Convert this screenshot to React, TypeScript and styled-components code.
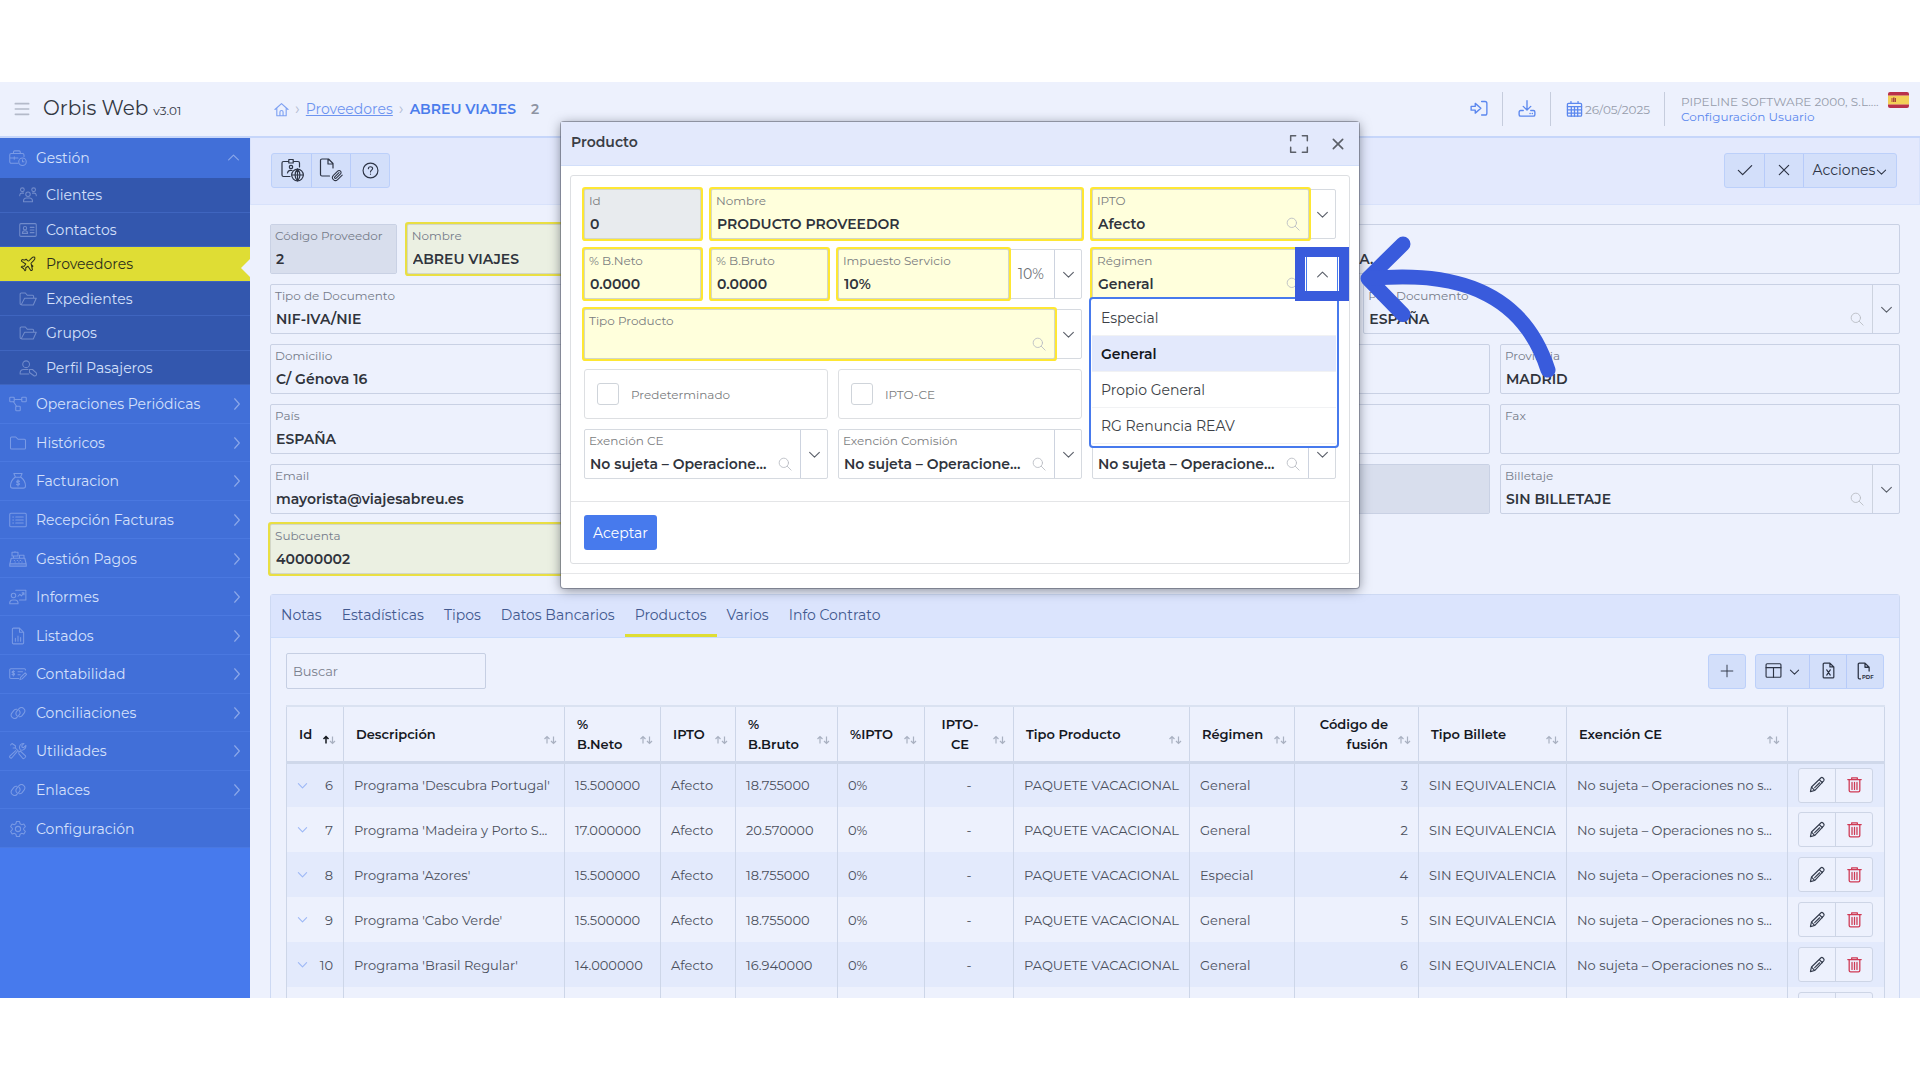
import React from 'react';
import styled, { createGlobalStyle, css } from 'styled-components';

const Global = createGlobalStyle`
  *, *::before, *::after { box-sizing: border-box; }
  html, body { margin: 0; background: #fff; }
  body, button, input { font-family: Montserrat, Inter, "Open Sans", sans-serif; }
  button { cursor: pointer; padding: 0; margin: 0; color: inherit; }
`;

/* ---------- icons ---------- */

const Glyph = styled.svg<{ $size?: number; $weight?: number }>`
  width: ${p => p.$size ?? 18}px;
  height: ${p => p.$size ?? 18}px;
  flex: none;
  display: block;
  fill: none;
  stroke: currentColor;
  stroke-width: ${p => p.$weight ?? 1.4};
  stroke-linecap: round;
  stroke-linejoin: round;
`;

const shapes: Record<string, React.ReactNode> = {
  menu: <path d="M2 4h20M2 12h20M2 20h20" />,
  briefcase: <><path d="M12 19H3a2 2 0 0 1-2-2V8a2 2 0 0 1 2-2h15a2 2 0 0 1 2 2v2M6 6V4a1.500 1.500 0 0 1 1.500-1.500h6A1.500 1.500 0 0 1 15 4v2M1 12h11M7 10.500v3" /><circle cx="18" cy="17" r="5" /><path d="M18 14.500V17h2" /></>,
  users: <><circle cx="12" cy="11" r="3" /><circle cx="4.500" cy="5" r="2.500" /><circle cx="19.500" cy="5" r="2.500" /><path d="M6 21v-1a4 4 0 0 1 4-4h4a4 4 0 0 1 4 4v1zM1 13v-1a3 3 0 0 1 3-2.500h2M23 13v-1a3 3 0 0 0-3-2.500h-2" /></>,
  card: <><rect x="1" y="3.500" width="22" height="17" rx="1.500" /><circle cx="8" cy="9.500" r="2.200" /><path d="M4.500 16.500a3.500 3.500 0 0 1 7 0zM15 8.500h5M15 12h5M15 15.500h5" /></>,
  plane: <path d="M17.800 19.200L16 11l3.500-3.500C21 6 21.500 4 21 3c-1-.5-3 0-4.500 1.500L13 8l-1.500-.4-2-2-1.800 1.200-2.900-.6c-.5-.1-.9.1-1.100.5l-.3.5c-.2.5-.1 1 .3 1.300L9 12l-2 3H4l-1 1 3 2 2 3 1-1v-3l3-2 3.500 5.300c.3.4.8.5 1.300.3l.5-.2c.4-.3.6-.7.5-1.200l-.6-2.600 1.300-1.800-2-2" />,
  folderOpen: <path d="M4 20h15l4-9H7.500L3 19.500A1.500 1.500 0 0 1 1.500 18V5.500A1.500 1.500 0 0 1 3 4h5.500l2.500 3h7a1.500 1.500 0 0 1 1.500 1.500V11" />,
  passenger: <><circle cx="9.500" cy="7" r="4.500" /><path d="M13 20H1.500v-1.500A4.500 4.500 0 0 1 6 14h6" /><path d="M14 14h4l5 4.500a2.500 2.500 0 0 1-3.500 3.500L14 18z" /></>,
  nodes: <><rect x="1" y="3" width="6" height="6" rx="1" /><rect x="17" y="3" width="6" height="6" rx="1" /><rect x="9" y="15" width="6" height="6" rx="1" /><path d="M7 6h10M6 9l4 6" /></>,
  folder: <path d="M2 5.500A1.500 1.500 0 0 1 3.500 4H9l3 3h8.500A1.500 1.500 0 0 1 22 8.500v10a1.500 1.500 0 0 1-1.500 1.500h-17A1.500 1.500 0 0 1 2 18.500z" />,
  money: <><path d="M8.500 6.500L6.500 2h11l-2 4.500M8 7h8c3 2.500 6 7.500 6 11.500a3 3 0 0 1-3 3H5a3 3 0 0 1-3-3C2 14.500 5 9.500 8 7z" /><path d="M14 12.500c-.6-1-3.800-1-3.800.6 0 1.700 3.800 1 3.800 2.800 0 1.600-3.300 1.600-4 .4M12 10.500v8" /></>,
  list: <><rect x="1" y="3" width="22" height="18" rx="1.500" /><path d="M5 8h1M5 12h1M5 16h1M9 8h10M9 12h10M9 16h10" /></>,
  register: <path d="M3 11h18l2 8v2.500H1V19zM1 18.500h22M6 11V8M4 8h8V3H4zM8 3v-1M14 11V7h6v4M7 14h.5M11 14h.5M15 14h.5M8 16h.5M13 16h.5M17 16h.5" />,
  report: <><path d="M9 3h13.500v13H14" /><circle cx="6" cy="10" r="3" /><path d="M1 21v-1.500A4 4 0 0 1 5 16h3a4 4 0 0 1 4 3.500V21zM12 11l2.500-2.500 2 2L20 6.500M17.500 6.500H20V9" /></>,
  fileChart: <path d="M14 1.500H6A1.500 1.500 0 0 0 4.500 3v18A1.500 1.500 0 0 0 6 22.500h12a1.500 1.500 0 0 0 1.500-1.500V7zM14 1.500V7h5.500M8.500 19v-4M12 19v-7M15.500 19v-5" />,
  check: <><path d="M13 18H2.500A1.500 1.500 0 0 1 1 16.500v-10A1.500 1.500 0 0 1 2.500 5h18A1.500 1.500 0 0 1 22 6.500M12 9h6M12 13h3M7.500 9c-1-1-3.500-.6-3.500.7 0 1.600 3.500.8 3.500 2.500 0 1.400-2.600 1.500-3.500.4M5.800 7.500v7" /><path d="M15.500 16.500l6-6 2 2-6 6-3 1z" /></>,
  chain: <path d="M10.500 15.500a4.500 4.500 0 0 1 0-6l3-3.500a4.500 4.500 0 0 1 7 5.500l-3 4a4.500 4.500 0 0 1-4 1.500M13.500 8.500a4.500 4.500 0 0 1 0 6l-3 3.500a4.500 4.500 0 0 1-7-5.500l3-4a4.500 4.500 0 0 1 4-1.500" />,
  tools: <path d="M2 4l2-2 4.500 3v3l5 5M8 8H5.500zM13 14l2-2 7 6.500c1 1.200-2 4.300-3.500 3.500L13 15.500M14.500 9.500c-1.500-4 1-8 5.500-7.500l-3 3 .5 2 2 .5 3-3c.6 4-3.500 7.500-7 6M11 12.500l-7.500 8.800c-1.500.8-3.300-1-2.500-2.500L9 11.500" />,
  gear: <><path d="M10 2h4l.8 3 2 1.200 3-.9 2 3.500-2.200 2.200v2l2.200 2.200-2 3.500-3-.9-2 1.200L14 22h-4l-.8-3-2-1.200-3 .9-2-3.500L4.400 13v-2L2.200 8.800l2-3.500 3 .9 2-1.200z" /><circle cx="12" cy="12" r="3.500" /></>,
  down: <path d="M3 8l9 9 9-9" />,
  caret: <path d="M3 11l9 9 9-9" />,
  up: <path d="M3 16.500l9-9 9 9" />,
  right: <path d="M8 3l8 9-8 9" />,
  home: <path d="M1.500 12L12 2.500 22.500 12M4.500 9.500V22h15V9.500M9.500 22v-6a2.500 2.500 0 0 1 5 0v6" />,
  signin: <path d="M15.500 2H20a2.500 2.500 0 0 1 2.500 2.500v13A2.500 2.500 0 0 1 20 20h-4.500M1.500 8.500v5H7V17.500l7.500-6.500L7 4.500v4z" />,
  drive: <><path d="M12 1v12M7 8.500l5 5 5-5M7 14H3.500A2 2 0 0 0 1.500 16v3.500a2 2 0 0 0 2 2h17a2 2 0 0 0 2-2V16a2 2 0 0 0-2-2H17" /><path d="M16 18h.2M19 18h.2" /></>,
  calendar: <><rect x="2" y="3.500" width="20" height="18" rx="1.500" /><path d="M2 8h20M2 12.500h20M2 17h20M7.500 8v13.500M12 8v13.500M16.500 8v13.500M7 .8v2.700M17 .8v2.700" /></>,
  help: <><circle cx="12" cy="12" r="10.500" /><path d="M9 9.500c0-3.600 6-3.600 6-.3 0 2.300-3 2.200-3 4.800M12 17v.3" /></>,
  badgeGlobe: <><path d="M8 3.500H3.500A1.500 1.500 0 0 0 2 5v12a1.500 1.500 0 0 0 1.500 1.500H10M14 3.500h4A1.500 1.500 0 0 1 19.500 5v4M8.800 1.500h4.400v3.500H8.800z" /><circle cx="11" cy="9" r="1.700" /><path d="M7.500 15c.5-2.500 2.500-3 4.500-2.500" /><circle cx="17.500" cy="17" r="5.800" /><path d="M11.700 17h11.600M17.500 11.200v11.600M17.500 11.200c-3.300 3.500-3.300 8.300 0 11.600M17.500 11.200c3.300 3.500 3.300 8.300 0 11.600" /></>,
  fileClip: <><path d="M10.500 18H3a1.500 1.500 0 0 1-1.500-1.500v-14A1.500 1.500 0 0 1 3 1h6.500L14 5.500V10M9 1v5h5" /><path transform="translate(12.500 11.500) scale(.5)" strokeWidth="2.100" d="M21.440 11.050l-9.190 9.190a6 6 0 0 1-8.490-8.490l8.570-8.570A4 4 0 1 1 18 8.840l-8.590 8.570a2 2 0 0 1-2.830-2.830l8.490-8.480" /></>,
  tick: <path d="M2 12.500l6.500 6.500L22 5.500" />,
  cross: <path d="M4 4l16 16M20 4L4 20" />,
  plus: <path d="M12 2v20M2 12h20" />,
  expand: <path d="M2 8V2h6M16 2h6v6M22 16v6h-6M8 22H2v-6" />,
  search: <><circle cx="10" cy="10" r="8" /><path d="M16 16l6.500 6.500" /></>,
  layout: <><rect x="1.500" y="2.500" width="21" height="19" rx="1.500" /><path d="M1.500 8h21M12 8v13.500" /></>,
  fileX: <path d="M14 1.500H6A1.500 1.500 0 0 0 4.500 3v18A1.500 1.500 0 0 0 6 22.500h12a1.500 1.500 0 0 0 1.500-1.500V7zM14 1.500V7h5.500M9.500 11l5 7.500M14.500 11l-5 7.500" />,
  filePdf: <><path d="M6 22.500H4.500A1.500 1.500 0 0 1 3 21V3a1.500 1.500 0 0 1 1.500-1.500H12L17.500 7v5M12 1.500V7h5.500" /><text x="8" y="22.500" fontSize="7" fontWeight="700" stroke="none" fill="currentColor">PDF</text></>,
  pencil: <path d="M2 22l1.500-6.500L17 2.500c1.500-1.500 5.500 2 4 4L8 20.500zM3.500 15.500L8 20.500M14.500 5l4.500 4.500M15 9.500l-7 7" />,
  trash: <path d="M2.500 5h19M8 5V2.500h8V5M4.500 5v15.500a2 2 0 0 0 2 2h11a2 2 0 0 0 2-2V5M8.500 9v10M12 9v10M15.500 9v10" />,
};

const Icon = ({ name, size, weight }: { name: string; size?: number; weight?: number }) => (
  <Glyph viewBox="0 0 24 24" $size={size} $weight={weight} aria-hidden="true">{shapes[name]}</Glyph>
);

/* ---------- shell ---------- */

const Page = styled.div`
  height: 100vh;
  padding: 82px 0;
  overflow: hidden;
`;

const Shell = styled.div`
  position: relative;
  height: 100%;
  display: flex;
  flex-direction: column;
  overflow: hidden;
  background: #edf1fd;
  color: #333843;
`;

const TopBar = styled.header`
  flex: none;
  height: 56px;
  display: flex;
  align-items: center;
  border-bottom: 2px solid #c6d6fa;
`;

const Brand = styled.div`
  width: 250px;
  padding-left: 14px;
  display: flex;
  align-items: center;
  gap: 13px;
  color: #b4bac9;
`;

const IconButton = styled.button`
  display: flex;
  align-items: center;
  justify-content: center;
  border: 0;
  background: none;
`;

const Product = styled.div`
  display: flex;
  align-items: baseline;
  gap: 5px;
  font-size: 20px;
  line-height: 24px;
  color: #333843;
  small { font-size: 12px; }
`;

const Crumbs = styled.nav`
  flex: 1;
  padding-left: 24px;
  display: flex;
  align-items: center;
  gap: 6px;
  font-size: 14px;
  color: #7ea1f2;
  a { color: #6d94f0; }
  strong { font-weight: 600; color: #4a7cec; }
`;

const CrumbMark = styled.span`
  font-size: 16px;
  line-height: 16px;
  color: #b4bdd2;
`;

const CrumbCount = styled.span`
  margin-left: 9px;
  font-weight: 600;
  color: #8d94a3;
`;

const Tools = styled.div`
  display: flex;
  align-items: center;
  height: 34px;
  padding-right: 11px;
`;

const Tool = styled.div`
  height: 34px;
  padding: 0 14px 0 15px;
  display: flex;
  align-items: center;
  gap: 2px;
  border-right: 1px solid #c6cddd;
  font-size: 12px;
  color: #969cab;
  svg { color: #5b87ee; }
`;

const Account = styled.div`
  width: 223px;
  padding: 0 8px 0 16px;
  font-size: 12px;
  line-height: 15px;
  color: #969cab;
  a { color: #5b87ee; text-decoration: none; }
`;

const AccountName = styled.div`
  white-space: nowrap;
`;

const Flag = styled.svg`
  align-self: flex-start;
  width: 21px;
  height: 16px;
`;

const Body = styled.div`
  flex: 1;
  min-height: 0;
  display: flex;
`;

/* ---------- sidebar ---------- */

const Side = styled.nav`
  flex: none;
  width: 250px;
  background: #477aed;
  color: #d5e0fb;
  font-size: 14px;
`;

const rowLink = css`
  display: flex;
  align-items: center;
  flex: 1;
  color: inherit;
  text-decoration: none;
  white-space: nowrap;
  svg { opacity: 0.38; }
  svg:last-child { opacity: 0.5; }
`;

const SideHead = styled.a`
  ${rowLink}
  height: 40px;
  padding: 0 10px 1px 9px;
  gap: 9px;
  background: #416fd8;
  span { flex: 1; }
`;

const SubList = styled.div`
  height: 207px;
  display: flex;
  flex-direction: column;
`;

const SubLink = styled.a<{ $active?: boolean }>`
  ${rowLink}
  position: relative;
  padding: 1px 0 0 19px;
  gap: 9px;
  background: #3357ae;
  border-bottom: 1px solid #3f65bf;
  ${p => p.$active && css`
    background: #dfdd34;
    color: #2c2f1c;
    svg { opacity: 1; }
    &::after {
      content: '';
      position: absolute;
      right: 0;
      top: 12px;
      border: 9px solid transparent;
      border-left: 0;
      border-right-color: #edf1fd;
    }
  `}
`;

const MainList = styled.div`
  height: 463px;
  display: flex;
  flex-direction: column;
`;

const MainLink = styled.a`
  ${rowLink}
  padding: 1px 6px 0 9px;
  gap: 9px;
  background: #416fd8;
  border-bottom: 1px solid #4a78e0;
  span { flex: 1; }
`;

/* ---------- main column ---------- */

const Main = styled.main`
  flex: 1;
  min-width: 0;
  overflow: hidden;
`;

const ActionBar = styled.div`
  height: 67px;
  padding: 15px 22px 0 20px;
  display: flex;
  justify-content: space-between;
  background: #e3e9fd;
  border: 1px solid #d8e2fb;
  border-top: 0;
`;

const ButtonGroup = styled.div`
  display: flex;
  height: 35px;
  border: 1px solid #bcd0fa;
  border-radius: 3px;
  background: #d3dffa;
  color: #2d3445;
`;

const GroupButton = styled.button<{ $width?: number; $gap?: number }>`
  width: ${p => p.$width ?? 39}px;
  display: flex;
  align-items: center;
  justify-content: center;
  gap: ${p => p.$gap ?? 1}px;
  padding-bottom: 1px;
  border: 0;
  background: none;
  font-size: 14px;
  & + & { border-left: 1px solid #b7cbf9; }
`;

const FormGrid = styled.form`
  display: grid;
  grid-template-columns: repeat(12, minmax(0, 1fr));
  gap: 10px;
  padding: 19px 20px 20px;
`;

type Tone = 'plain' | 'disabled' | 'required' | 'locked';

const FieldShell = styled.div<{ $span: number; $modal?: boolean }>`
  position: relative;
  grid-column: span ${p => p.$span};
  height: 50px;
  display: flex;
  border: 1px solid ${p => (p.$modal ? '#d6dae0' : '#c9d1e4')};
  border-radius: 2px;
`;

const FieldBody = styled.label<{ $tone: Tone; $modal?: boolean }>`
  flex: 1;
  min-width: 0;
  position: relative;
  display: flex;
  flex-direction: column;
  gap: 3px;
  padding: 2px 5px 0 4px;
  font-size: 12px;
  line-height: 17px;
  color: ${p => (p.$modal ? '#7b7d80' : '#767c8a')};
  white-space: nowrap;
  background: ${p => {
    if (p.$tone === 'disabled') return '#d8deed';
    if (p.$tone === 'locked') return '#e8ebee';
    if (p.$tone === 'required') return p.$modal ? '#ffffdc' : '#ebf0e2';
    return 'transparent';
  }};
  ${p => (p.$tone === 'required' || p.$tone === 'locked') && css`
    border-radius: 1px;
    box-shadow: 0 0 0 1px #d3d7c8, 0 0 0 3px ${p.$modal ? '#fee733' : '#e9df43'};
  `}
`;

const FieldInput = styled.input`
  width: 100%;
  height: 24px;
  padding: 0 0 0 1px;
  border: 0;
  outline: 0;
  background: none;
  font-size: 14px;
  font-weight: 600;
  color: #30343c;
  text-overflow: ellipsis;
`;

const Lens = styled.span`
  position: absolute;
  right: 8px;
  bottom: 7px;
  color: #b9bdc4;
`;

const Arrow = styled.button`
  width: 27px;
  flex: none;
  display: flex;
  align-items: center;
  justify-content: center;
  border: 0;
  border-left: 1px solid #cdd3df;
  background: none;
  color: #5a5f69;
`;

const Addon = styled.span`
  width: 46px;
  flex: none;
  display: flex;
  align-items: center;
  justify-content: center;
  font-size: 14px;
  color: #6d7076;
`;

interface FieldProps {
  id: string;
  label?: string;
  value?: string;
  span: number;
  tone?: Tone;
  modal?: boolean;
  combo?: boolean;
  addon?: string;
  children?: React.ReactNode;
}

const Field = ({ id, label, value = '', span, tone = 'plain', modal, combo, addon, children }: FieldProps) => (
  <FieldShell $span={span} $modal={modal}>
    <FieldBody htmlFor={id} $tone={tone} $modal={modal}>
      {label ?? '\u00a0'}
      <FieldInput id={id} defaultValue={value} aria-label={label ?? id} readOnly={tone === 'disabled' || tone === 'locked'} />
      {combo && !addon && <Lens><Icon name="search" size={14} weight={1.5} /></Lens>}
    </FieldBody>
    {addon && <Addon>{addon}</Addon>}
    {combo && <Arrow type="button" aria-label={`Desplegar ${label ?? id}`}><Icon name="down" size={13} weight={2} /></Arrow>}
    {children}
  </FieldShell>
);

/* ---------- tab card ---------- */

const Card = styled.section`
  margin: 0 20px;
  border: 1px solid #cdd9f3;
  border-radius: 3px 3px 0 0;
`;

const Tabs = styled.div`
  height: 43px;
  display: flex;
  background: #dbe4fd;
  border-bottom: 1px solid #cbdcfb;
`;

const Tab = styled.button<{ $active?: boolean }>`
  padding: 0 10px;
  border: 0;
  border-bottom: 3px solid ${p => (p.$active ? '#dfdd34' : 'transparent')};
  background: none;
  font-size: 14px;
  color: #42598f;
`;

const Bar = styled.div`
  display: flex;
  align-items: center;
  justify-content: space-between;
  padding: 15px 15px 0;
`;

const SearchBox = styled.input`
  width: 200px;
  height: 36px;
  padding: 0 6px;
  border: 1px solid #c6cfe3;
  border-radius: 2px;
  background: none;
  font-size: 13px;
  &::placeholder { color: #7a808d; opacity: 1; }
`;

const BarGroups = styled.div`
  display: flex;
  gap: 9px;
`;

const Table = styled.table`
  width: calc(100% - 30px);
  margin: 16px 15px 0;
  border-collapse: collapse;
  table-layout: fixed;
  font-size: 13px;
  color: #4b505c;
  th, td { border-left: 1px solid #cdd6e8; border-right: 1px solid #cdd6e8; white-space: nowrap; }
`;

const HeadRow = styled.tr`
  height: 56px;
  border-top: 2px solid #dae2f1;
  border-bottom: 3px solid #cfd8ea;
`;

const Th = styled.th`
  padding: 0 7px 0 12px;
  font-weight: 600;
  line-height: 20px;
  color: #15181f;
`;

const ThInner = styled.div<{ $align?: string }>`
  display: flex;
  align-items: center;
  gap: 9px;
  text-align: ${p => p.$align ?? 'left'};
  span { flex: 1; }
`;

const SortMark = styled.svg`
  width: 14px;
  height: 22px;
  flex: none;
  fill: none;
  stroke: #a9b1c1;
`;

const Row = styled.tr`
  height: 45px;
  &:nth-child(odd) { background: #e3eafc; }
`;

const Td = styled.td<{ $align?: string }>`
  padding: 0 10px;
  text-align: ${p => p.$align ?? 'left'};
`;

const IdCell = styled.div`
  display: flex;
  align-items: center;
  justify-content: space-between;
  svg { color: #9db8f6; }
`;

const RowActions = styled.div`
  width: 75px;
  height: 35px;
  display: flex;
  border: 1px solid #cdd5e6;
  border-radius: 3px;
  background: #edf1fd;
`;

const RowButton = styled.button<{ $danger?: boolean }>`
  flex: 1;
  display: flex;
  align-items: center;
  justify-content: center;
  padding-bottom: 1px;
  border: 0;
  background: none;
  color: ${p => (p.$danger ? '#cf3a55' : '#333b4c')};
  & + & { border-left: 1px solid #cdd5e6; }
`;

/* ---------- dialog ---------- */

const DialogLayer = styled.div`
  position: absolute;
  inset: 0;
  display: flex;
  align-items: flex-start;
  justify-content: center;
  padding-top: 40px;
`;

const Dialog = styled.div`
  width: 798px;
  background: #fff;
  border-radius: 3px;
  box-shadow: 0 0 0 1px rgba(70, 75, 90, 0.45), 0 2px 12px rgba(40, 45, 60, 0.55);
`;

const DialogHead = styled.div`
  height: 44px;
  padding: 0 14px 3px 10px;
  display: flex;
  align-items: center;
  background: #e3e9fc;
  border-bottom: 1px solid #d2dffa;
  color: #5b5f68;
  h2 { flex: 1; margin: 0; font-size: 14px; font-weight: 600; color: #3a3d45; }
  button { margin-top: 4px; }
  button + button { margin-left: 22px; }
`;

const Panel = styled.div`
  margin: 9px;
  border: 1px solid #dddfe2;
  border-radius: 3px;
`;

const DialogGrid = styled.form`
  display: grid;
  grid-template-columns: repeat(6, minmax(0, 1fr));
  gap: 10px;
  padding: 13px 13px 22px;
`;

const CheckBox = styled.label`
  grid-column: span 2;
  height: 50px;
  padding-left: 12px;
  display: flex;
  align-items: center;
  gap: 12px;
  border: 1px solid #dddfe2;
  border-radius: 3px;
  font-size: 12px;
  color: #7b7d80;
  input {
    appearance: none;
    width: 22px;
    height: 22px;
    margin: 0;
    border: 1px solid #cfd4da;
    border-radius: 3px;
    background: #fff;
  }
`;

const PanelFoot = styled.div`
  padding: 13px;
  border-top: 1px solid #e4e5e7;
`;

const Primary = styled.button`
  height: 35px;
  padding: 0 9px;
  border: 0;
  border-radius: 3px;
  background: #477aed;
  color: #fff;
  font-size: 14px;
`;

const DialogFoot = styled.div`
  height: 15px;
  border-top: 1px solid #e6e7e9;
`;

const Options = styled.div`
  position: absolute;
  z-index: 2;
  left: -4px;
  right: -4px;
  top: 47px;
  padding: 1px 1px 2px;
  border: 2px solid #477aed;
  border-radius: 4px;
  background: #fff;
`;

const Option = styled.button<{ $active?: boolean }>`
  display: block;
  width: 100%;
  height: 36px;
  padding: 0 9px;
  border: 0;
  border-bottom: 1px solid #f1f2f4;
  text-align: left;
  font-size: 14px;
  font-weight: ${p => (p.$active ? 600 : 400)};
  background: ${p => (p.$active ? '#e3e9fc' : '#fff')};
  color: ${p => (p.$active ? '#15181f' : '#3c3f46')};
`;

const Spotlight = styled.div`
  position: absolute;
  z-index: 3;
  right: -14px;
  top: -3px;
  width: 54px;
  height: 54px;
  display: flex;
  align-items: center;
  justify-content: center;
  border: 10px solid #395bdc;
  background: #fff;
  color: #5a5f69;
  pointer-events: none;
  &::before {
    content: '';
    position: absolute;
    inset: 0 1px;
    border: solid #477aed;
    border-width: 0 1px;
  }
`;

const Pointer = styled.svg`
  position: absolute;
  z-index: 3;
  left: 263px;
  top: -20px;
  width: 210px;
  height: 160px;
  fill: none;
  stroke: #395bdc;
  stroke-width: 15;
  stroke-linecap: round;
  stroke-linejoin: round;
  pointer-events: none;
`;

/* ---------- data ---------- */

const subItems = [
  ['users', 'Clientes'],
  ['card', 'Contactos'],
  ['plane', 'Proveedores'],
  ['folderOpen', 'Expedientes'],
  ['folderOpen', 'Grupos'],
  ['passenger', 'Perfil Pasajeros'],
];

const mainItems = [
  ['nodes', 'Operaciones Periódicas'],
  ['folder', 'Históricos'],
  ['money', 'Facturacion'],
  ['list', 'Recepción Facturas'],
  ['register', 'Gestión Pagos'],
  ['report', 'Informes'],
  ['fileChart', 'Listados'],
  ['check', 'Contabilidad'],
  ['chain', 'Conciliaciones'],
  ['tools', 'Utilidades'],
  ['chain', 'Enlaces'],
  ['gear', 'Configuración'],
];

const tabs = ['Notas', 'Estadísticas', 'Tipos', 'Datos Bancarios', 'Productos', 'Varios', 'Info Contrato'];

const columns: { width: number; title: string[]; align?: string }[] = [
  { width: 57, title: ['Id'] },
  { width: 221, title: ['Descripción'] },
  { width: 96, title: ['%', 'B.Neto'] },
  { width: 75, title: ['IPTO'] },
  { width: 102, title: ['%', 'B.Bruto'] },
  { width: 87, title: ['%IPTO'] },
  { width: 89, title: ['IPTO-', 'CE'], align: 'center' },
  { width: 176, title: ['Tipo Producto'] },
  { width: 105, title: ['Régimen'] },
  { width: 124, title: ['Código de', 'fusión'], align: 'right' },
  { width: 148, title: ['Tipo Billete'] },
  { width: 221, title: ['Exención CE'] },
];

const rows = [
  ['6', "Programa 'Descubra Portugal'", '15.500000', '18.755000', 'General', '3'],
  ['7', "Programa 'Madeira y Porto S...", '17.000000', '20.570000', 'General', '2'],
  ['8', "Programa 'Azores'", '15.500000', '18.755000', 'Especial', '4'],
  ['9', "Programa 'Cabo Verde'", '15.500000', '18.755000', 'General', '5'],
  ['10', "Programa 'Brasil Regular'", '14.000000', '16.940000', 'General', '6'],
  ['', '', '', '', '', ''],
];

const regimes = ['Especial', 'General', 'Propio General', 'RG Renuncia REAV'];

const Sort = ({ active }: { active?: boolean }) => (
  <SortMark viewBox="0 0 14 22" aria-hidden="true">
    <path d="M4 20.500v-7M1.500 16L4 13.500 6.500 16" stroke={active ? '#15181f' : undefined} strokeWidth={active ? 1.5 : 1.2} />
    <path d="M10.500 13.500v7M8 18l2.500 2.500L13 18" strokeWidth="1.200" />
  </SortMark>
);

const SpainFlag = () => (
  <Flag viewBox="0 0 21 16" role="img" aria-label="Español">
    <rect width="21" height="16" rx="2" fill="#b9304a" />
    <rect y="4" width="21" height="8" fill="#f3cf56" />
    <path d="M0 3.500h21M0 12.500h21" stroke="#d98a6a" />
    <path d="M3.500 6h1v4h-1zM7 6h1v4H7zM5 5.500h1.600v4.500H5z" fill="#a8433a" />
  </Flag>
);

const ProductDialog = () => (
  <DialogLayer>
    <Dialog role="dialog" aria-labelledby="dialog-title">
      <DialogHead>
        <h2 id="dialog-title">Producto</h2>
        <IconButton aria-label="Maximizar"><Icon name="expand" size={20} weight={1.8} /></IconButton>
        <IconButton aria-label="Cerrar"><Icon name="cross" size={14} weight={2.8} /></IconButton>
      </DialogHead>
      <Panel>
        <DialogGrid>
          <Field modal id="p-id" label="Id" value="0" span={1} tone="locked" />
          <Field modal id="p-nombre" label="Nombre" value="PRODUCTO PROVEEDOR" span={3} tone="required" />
          <Field modal id="p-ipto" label="IPTO" value="Afecto" span={2} tone="required" combo />
          <Field modal id="p-neto" label="% B.Neto" value="0.0000" span={1} tone="required" />
          <Field modal id="p-bruto" label="% B.Bruto" value="0.0000" span={1} tone="required" />
          <Field modal id="p-impuesto" label="Impuesto Servicio" value="10%" span={2} tone="required" combo addon="10%" />
          <Field modal id="p-regimen" label="Régimen" value="General" span={2} tone="required" combo>
            <Options role="listbox" aria-label="Régimen">
              {regimes.map(r => (
                <Option key={r} type="button" role="option" aria-selected={r === 'General'} $active={r === 'General'}>{r}</Option>
              ))}
            </Options>
            <Spotlight><Icon name="up" size={13} weight={2} /></Spotlight>
            <Pointer viewBox="1356 229 210 160" aria-hidden="true">
              <path d="M1403 243L1368 277.500L1403 313.500" />
              <path d="M1370 277.500C1470 268 1526 300 1548 369" />
            </Pointer>
          </Field>
          <Field modal id="p-tipo" label="Tipo Producto" span={4} tone="required" combo />
          <Field modal id="p-extra" span={2} />
          <CheckBox><input type="checkbox" />Predeterminado</CheckBox>
          <CheckBox><input type="checkbox" />IPTO-CE</CheckBox>
          <Field modal id="p-nota" span={2} />
          <Field modal id="p-exce" label="Exención CE" value="No sujeta – Operacione..." span={2} combo />
          <Field modal id="p-excom" label="Exención Comisión" value="No sujeta – Operacione..." span={2} combo />
          <Field modal id="p-exotra" value="No sujeta – Operacione..." span={2} combo />
        </DialogGrid>
        <PanelFoot><Primary type="button">Aceptar</Primary></PanelFoot>
      </Panel>
      <DialogFoot />
    </Dialog>
  </DialogLayer>
);

const App = () => (
  <Page>
    <Global />
    <Shell>
      <TopBar>
        <Brand>
          <IconButton aria-label="Menú"><Icon name="menu" size={16} weight={2.5} /></IconButton>
          <Product>Orbis Web <small>v3.01</small></Product>
        </Brand>
        <Crumbs aria-label="Ruta">
          <Icon name="home" size={15} weight={1.8} />
          <CrumbMark>›</CrumbMark>
          <a href="#proveedores">Proveedores</a>
          <CrumbMark>›</CrumbMark>
          <strong>ABREU VIAJES</strong>
          <CrumbCount>2</CrumbCount>
        </Crumbs>
        <Tools>
          <Tool><Icon name="signin" size={18} weight={1.8} /></Tool>
          <Tool><Icon name="drive" size={18} weight={1.8} /></Tool>
          <Tool><Icon name="calendar" size={17} weight={1.8} />26/05/2025</Tool>
          <Account>
            <AccountName>PIPELINE SOFTWARE 2000, S.L....</AccountName>
            <a href="#usuario">Configuración Usuario</a>
          </Account>
          <SpainFlag />
        </Tools>
      </TopBar>
      <Body>
        <Side aria-label="Principal">
          <SideHead href="#gestion"><Icon name="briefcase" /><span>Gestión</span><Icon name="up" size={13} weight={2} /></SideHead>
          <SubList>
            {subItems.map(([icon, text]) => (
              <SubLink key={text} href={`#${icon}`} $active={text === 'Proveedores'}><Icon name={icon} /><span>{text}</span></SubLink>
            ))}
          </SubList>
          <MainList>
            {mainItems.map(([icon, text]) => (
              <MainLink key={text} href={`#${icon}`}>
                <Icon name={icon} />
                <span>{text}</span>
                {text !== 'Configuración' && <Icon name="right" size={14} weight={2} />}
              </MainLink>
            ))}
          </MainList>
        </Side>
        <Main>
          <ActionBar>
            <ButtonGroup>
              <GroupButton aria-label="Ficha web"><Icon name="badgeGlobe" size={24} weight={1.2} /></GroupButton>
              <GroupButton aria-label="Adjuntos"><Icon name="fileClip" size={24} weight={1.2} /></GroupButton>
              <GroupButton aria-label="Ayuda"><Icon name="help" size={17} weight={1.6} /></GroupButton>
            </ButtonGroup>
            <ButtonGroup>
              <GroupButton aria-label="Guardar"><Icon name="tick" size={16} weight={1.8} /></GroupButton>
              <GroupButton aria-label="Cancelar"><Icon name="cross" size={14} weight={2} /></GroupButton>
              <GroupButton $width={93}>Acciones<Icon name="caret" size={11} weight={2.2} /></GroupButton>
            </ButtonGroup>
          </ActionBar>
          <FormGrid>
            <Field id="codigo" label="Código Proveedor" value="2" span={1} tone="disabled" />
            <Field id="nombre" label="Nombre" value="ABREU VIAJES" span={6} tone="required" />
            <Field id="razon" value="VIAJES ABREU, S.A." span={5} />
            <Field id="tipodoc" label="Tipo de Documento" value="NIF-IVA/NIE" span={4} combo />
            <Field id="documento" span={4} />
            <Field id="paisdoc" label="País Documento" value="ESPAÑA" span={4} combo />
            <Field id="domicilio" label="Domicilio" value="C/ Génova 16" span={5} />
            <Field id="poblacion" span={4} />
            <Field id="provincia" label="Provincia" value="MADRID" span={3} />
            <Field id="pais" label="País" value="ESPAÑA" span={4} combo />
            <Field id="telefono" span={5} />
            <Field id="fax" label="Fax" span={3} />
            <Field id="email" label="Email" value="mayorista@viajesabreu.es" span={5} />
            <Field id="saldo" span={4} tone="disabled" />
            <Field id="billetaje" label="Billetaje" value="SIN BILLETAJE" span={3} combo />
            <Field id="subcuenta" label="Subcuenta" value="40000002" span={4} tone="required" />
          </FormGrid>
          <Card>
            <Tabs role="tablist">
              {tabs.map(t => <Tab key={t} role="tab" aria-selected={t === 'Productos'} $active={t === 'Productos'}>{t}</Tab>)}
            </Tabs>
            <Bar>
              <SearchBox type="text" placeholder="Buscar" aria-label="Buscar" />
              <BarGroups>
                <ButtonGroup>
                  <GroupButton $width={36} aria-label="Añadir"><Icon name="plus" size={14} weight={1.6} /></GroupButton>
                </ButtonGroup>
                <ButtonGroup>
                  <GroupButton $width={53} $gap={7} aria-label="Columnas"><Icon name="layout" size={17} weight={1.6} /><Icon name="caret" size={11} weight={2.2} /></GroupButton>
                  <GroupButton $width={37} aria-label="Exportar a Excel"><Icon name="fileX" size={17} weight={1.7} /></GroupButton>
                  <GroupButton $width={37} aria-label="Exportar a PDF"><Icon name="filePdf" size={18} weight={1.7} /></GroupButton>
                </ButtonGroup>
              </BarGroups>
            </Bar>
            <Table>
              <colgroup>
                {columns.map(c => <col key={c.title.join(' ')} width={c.width} />)}
                <col width={97} />
              </colgroup>
              <thead>
                <HeadRow>
                  {columns.map((c, i) => (
                    <Th key={c.title.join(' ')} scope="col">
                      <ThInner $align={c.align}>
                        <span>{c.title[0]}{c.title[1] && <><br />{c.title[1]}</>}</span>
                        <Sort active={i === 0} />
                      </ThInner>
                    </Th>
                  ))}
                  <Th as="td" />
                </HeadRow>
              </thead>
              <tbody>
                {rows.map(([id, name, net, gross, regime, code]) => (
                  <Row key={id || 'next'}>
                    <Td><IdCell>{id && <Icon name="down" size={11} weight={2.4} />}{id}</IdCell></Td>
                    <Td>{name}</Td>
                    <Td>{net}</Td>
                    <Td>{id && 'Afecto'}</Td>
                    <Td>{gross}</Td>
                    <Td>{id && '0%'}</Td>
                    <Td $align="center">{id && '-'}</Td>
                    <Td>{id && 'PAQUETE VACACIONAL'}</Td>
                    <Td>{regime}</Td>
                    <Td $align="right">{code}</Td>
                    <Td>{id && 'SIN EQUIVALENCIA'}</Td>
                    <Td>{id && 'No sujeta – Operaciones no s...'}</Td>
                    <Td>
                      <RowActions>
                        <RowButton aria-label="Editar"><Icon name="pencil" size={17} weight={1.6} /></RowButton>
                        <RowButton $danger aria-label="Eliminar"><Icon name="trash" size={17} weight={1.8} /></RowButton>
                      </RowActions>
                    </Td>
                  </Row>
                ))}
              </tbody>
            </Table>
          </Card>
        </Main>
      </Body>
      <ProductDialog />
    </Shell>
  </Page>
);

export default App;
